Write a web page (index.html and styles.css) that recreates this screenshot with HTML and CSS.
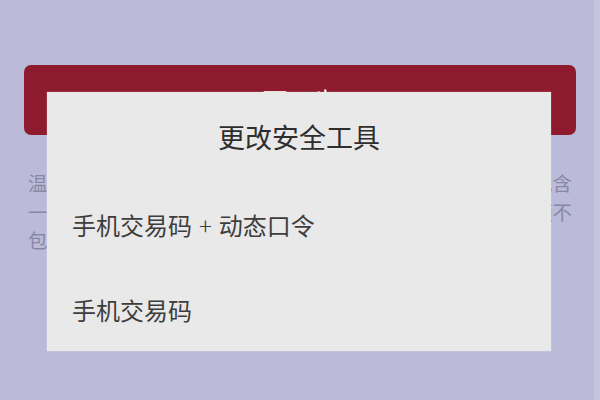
FILE: index.html
```html
<!DOCTYPE html>
<html lang="zh-CN">
<head>
<meta charset="utf-8">
<title>更改安全工具</title>
<link rel="stylesheet" href="styles.css">
</head>
<body>
<div class="screen">
  <main class="page">
    <button class="primary">下一步</button>
    <p class="tip">温馨提示：不同安全工具对应的转账限额不同，单笔限额均包含一次性转账及多笔累计转账金额，具体以页面提示为准，限额不包括跨行转账手续费。</p>
  </main>
  <div class="edge"></div>
  <div class="dialog">
    <div class="dialog-title">更改安全工具</div>
    <div class="option option-first">手机交易码<span class="plus">+</span>动态口令</div>
    <div class="option option-last">手机交易码</div>
  </div>
</div>
</body>
</html>
```

FILE: styles.css
```css
html, body {
  margin: 0;
  padding: 0;
}
body {
  font-family: "Noto Sans CJK SC", "Noto Sans", sans-serif;
}
.screen {
  position: relative;
  width: 600px;
  height: 400px;
  display: flex;
  background: #bbbbd9;
  overflow: hidden;
}
.page {
  flex: 1;
  padding: 65px 18px 0 24px;
  display: flex;
  flex-direction: column;
}
.primary {
  width: 100%;
  height: 70px;
  border: none;
  border-radius: 7px;
  background: #8e1b2d;
  color: #ffffff;
  font-family: inherit;
  font-size: 25px;
  letter-spacing: 0;
}
.tip {
  margin: 34px 4px 0 4px;
  font-size: 19.4px;
  line-height: 28.5px;
  color: #8888a4;
  text-align: justify;
}
.edge {
  width: 6px;
  background: #c4c4dd;
}
.dialog {
  position: absolute;
  left: 47px;
  top: 92px;
  width: 504px;
  height: 259px;
  background: #e9e9e9;
  display: flex;
  flex-direction: column;
  box-shadow: 0 0 1px rgba(255, 255, 255, 0.6);
}
.dialog-title {
  height: 90px;
  line-height: 90px;
  text-align: center;
  font-size: 27px;
  color: #2e2e2e;
}
.option {
  padding-left: 25px;
  font-size: 24px;
  color: #3d3d3d;
  white-space: nowrap;
}
.plus {
  display: inline-block;
  margin: 0 7px;
  font-weight: 300;
}
.option-first {
  height: 86px;
  line-height: 86px;
}
.option-last {
  height: 83px;
  line-height: 83px;
}
```
